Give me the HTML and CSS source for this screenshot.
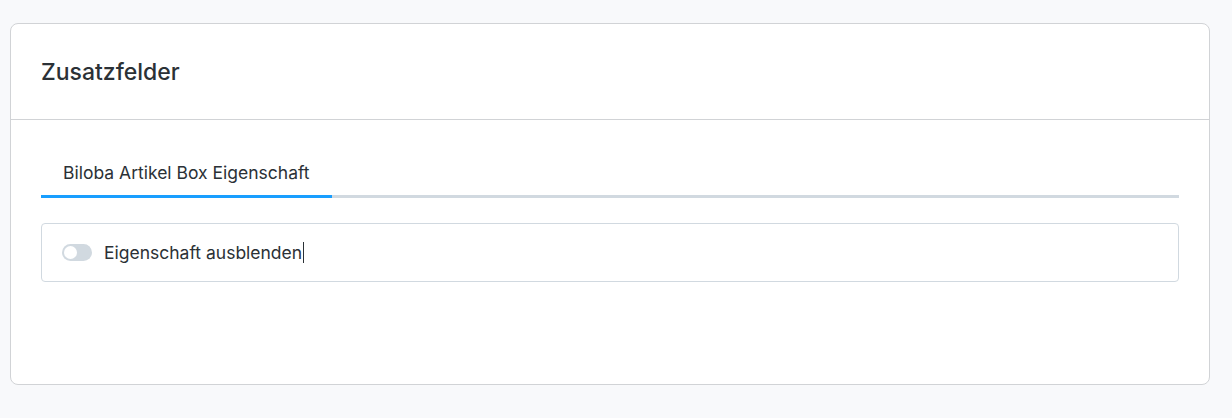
FILE: index.html
```html
<!DOCTYPE html>
<html lang="de">
<head>
  <meta charset="UTF-8" />
  <title>Zusatzfelder</title>
  <link rel="stylesheet" href="styles.css">
</head>
<body>
  <div class="card">
    <div class="card-header">
      <h2>Zusatzfelder</h2>
    </div>
    <div class="card-body">
      <div class="tabs">
        <div class="tab active">Biloba Artikel Box Eigenschaft</div>
      </div>
      <div class="field">
        <label class="switch">
          <input type="checkbox" />
          <span class="slider"></span>
        </label>
        <span class="field-label">Eigenschaft ausblenden</span><span class="caret"></span>
      </div>
    </div>
  </div>
</body>
</html>
```

FILE: styles.css
```css
body {
  margin: 0;
  padding: 23px 22px 0 10px;
  background: #f8f9fb;
  font-family: Inter, "Liberation Sans", sans-serif;
  color: #2b3136;
}
.card {
  background: #fff;
  border: 1px solid #d1d3d6;
  border-radius: 8px;
  height: 360px;
}
.card-header {
  height: 95px;
  border-bottom: 1px solid #d1d3d6;
  padding: 0 30px;
  display: flex;
  align-items: center;
}
.card-header h2 {
  margin: 0;
  font-size: 23px;
  font-weight: 500;
  color: #2b3136;
}
.card-body {
  padding: 38px 30px 0 30px;
}
.tabs {
  display: flex;
  border-bottom: 3px solid #d1d9e0;
}
.tab {
  padding: 4px 22px 12px 22px;
  font-size: 17.5px;
  line-height: 21px;
  margin-bottom: -3px;
  border-bottom: 3px solid transparent;
}
.tab.active {
  border-bottom-color: #189eff;
}
.field {
  margin-top: 25px;
  border: 1px solid #d1d9e0;
  border-radius: 4px;
  height: 57px;
  display: flex;
  align-items: center;
  padding-left: 20px;
  font-size: 17.5px;
}
.switch {
  position: relative;
  width: 30px;
  height: 17px;
  margin-right: 12px;
}
.switch input {
  display: none;
}
.slider {
  position: absolute;
  inset: 0;
  background: #d1d9e0;
  border-radius: 9px;
}
.slider::before {
  content: "";
  position: absolute;
  left: 2px;
  top: 2px;
  width: 13px;
  height: 13px;
  border-radius: 50%;
  background: #fff;
}
.caret {
  display: inline-block;
  width: 1px;
  height: 21px;
  background: #2b3136;
  margin-left: 1px;
}
```
